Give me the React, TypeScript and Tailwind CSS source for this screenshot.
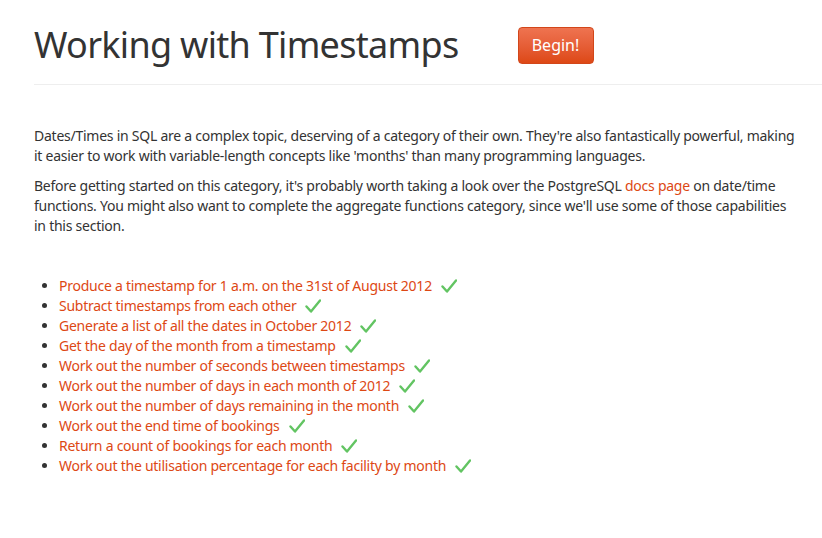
import React from 'react';

const exercises = [
  'Produce a timestamp for 1 a.m. on the 31st of August 2012',
  'Subtract timestamps from each other',
  'Generate a list of all the dates in October 2012',
  'Get the day of the month from a timestamp',
  'Work out the number of seconds between timestamps',
  'Work out the number of days in each month of 2012',
  'Work out the number of days remaining in the month',
  'Work out the end time of bookings',
  'Return a count of bookings for each month',
  'Work out the utilisation percentage for each facility by month',
];

const Check: React.FC = () => (
  <svg width="16" height="16" viewBox="0 0 16 16" className="ml-[9px] inline-block align-[-3px]">
    <path d="M1.5 8.5 L6 13.5 L15 2.5" fill="none" stroke="#62c462" strokeWidth="2.4" strokeLinecap="round" strokeLinejoin="round" />
  </svg>
);

const App: React.FC = () => {
  return (
    <div className="min-h-[538px] bg-white pl-[34px] text-[#333] font-['Noto_Sans',sans-serif] text-[14px] leading-[20px]">
      {/* Header */}
      <div className="flex items-center pt-[22px] pb-[16px] border-b border-[#eeeeee]">
        <h1 className="text-[36px] leading-[46px] font-normal tracking-[-0.7px] text-[#333]">
          Working with Timestamps
        </h1>
        <button className="ml-[59px] h-[37px] w-[76px] rounded-[4px] border border-[#d2461a] bg-gradient-to-b from-[#ef7350] to-[#dd4814] text-[16px] text-white">
          Begin!
        </button>
      </div>

      {/* Intro */}
      <div className="pt-[41px] pr-[27px] tracking-[-0.25px]">
        <p className="mb-[10px]">
          Dates/Times in SQL are a complex topic, deserving of a category of their own. They're also fantastically powerful, making it easier to work with variable-length concepts like 'months' than many programming languages.
        </p>
        <p className="mb-[10px]">
          Before getting started on this category, it's probably worth taking a look over the PostgreSQL{' '}
          <a href="#" className="text-[#dd4814]">docs page</a> on date/time functions. You might also want to complete the aggregate functions category, since we'll use some of those capabilities in this section.
        </p>
      </div>

      {/* Exercises */}
      <ul className="mt-[40px] list-disc pl-[25px] tracking-[-0.25px]">
        {exercises.map((e) => (
          <li key={e}>
            <a href="#" className="text-[#dd4814]">{e}</a>
            <Check />
          </li>
        ))}
      </ul>
    </div>
  );
};

export default App;
